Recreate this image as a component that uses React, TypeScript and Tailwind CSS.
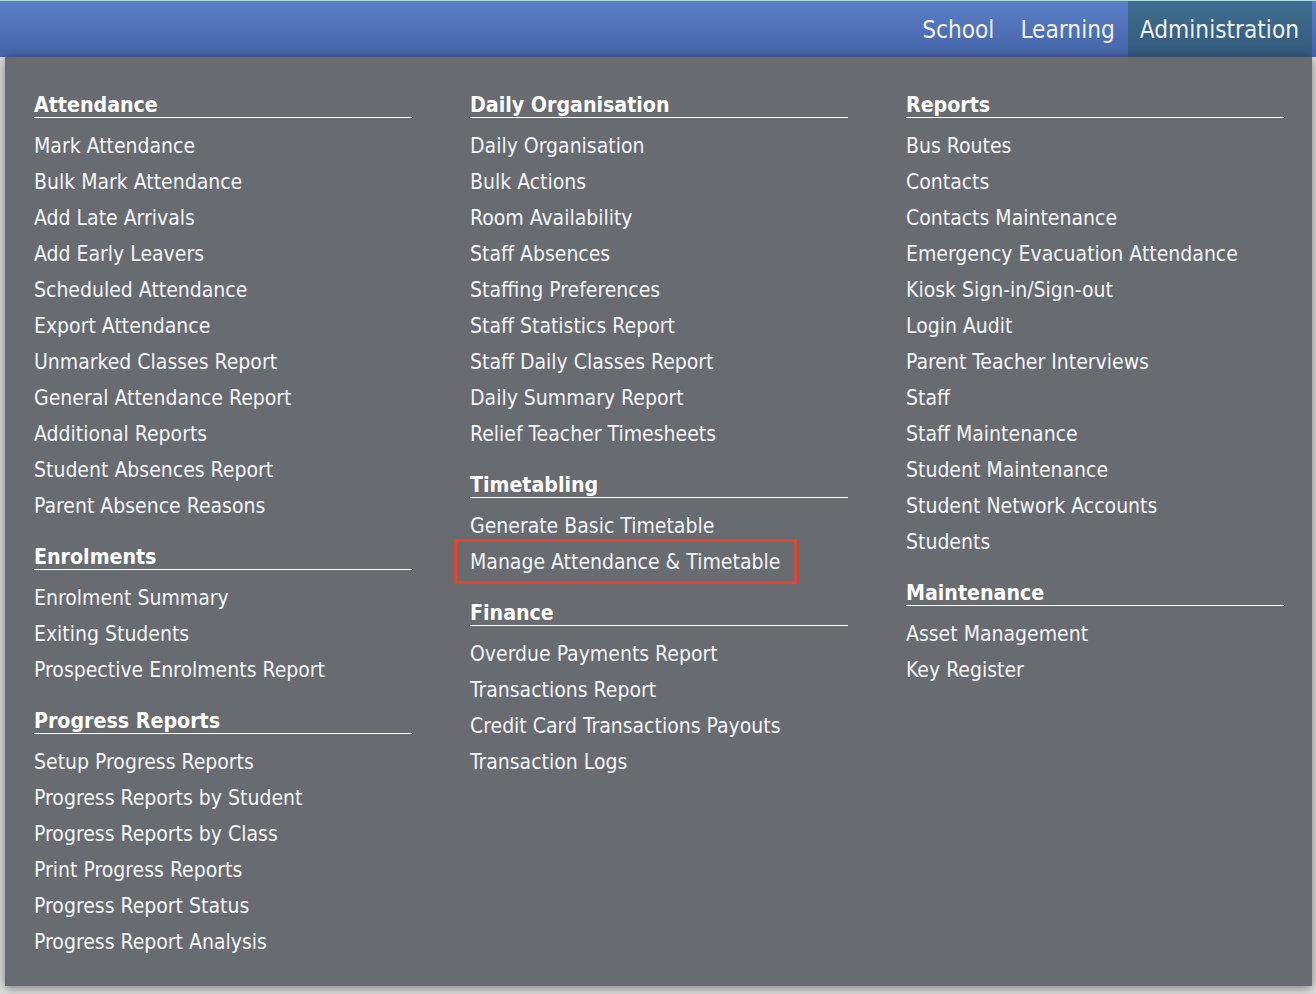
import React from "react";

type Section = { title: string; items: string[] };

const col1: Section[] = [
  {
    title: "Attendance",
    items: [
      "Mark Attendance",
      "Bulk Mark Attendance",
      "Add Late Arrivals",
      "Add Early Leavers",
      "Scheduled Attendance",
      "Export Attendance",
      "Unmarked Classes Report",
      "General Attendance Report",
      "Additional Reports",
      "Student Absences Report",
      "Parent Absence Reasons",
    ],
  },
  {
    title: "Enrolments",
    items: ["Enrolment Summary", "Exiting Students", "Prospective Enrolments Report"],
  },
  {
    title: "Progress Reports",
    items: [
      "Setup Progress Reports",
      "Progress Reports by Student",
      "Progress Reports by Class",
      "Print Progress Reports",
      "Progress Report Status",
      "Progress Report Analysis",
    ],
  },
];

const col2: Section[] = [
  {
    title: "Daily Organisation",
    items: [
      "Daily Organisation",
      "Bulk Actions",
      "Room Availability",
      "Staff Absences",
      "Staffing Preferences",
      "Staff Statistics Report",
      "Staff Daily Classes Report",
      "Daily Summary Report",
      "Relief Teacher Timesheets",
    ],
  },
  {
    title: "Timetabling",
    items: ["Generate Basic Timetable", "Manage Attendance & Timetable"],
  },
  {
    title: "Finance",
    items: [
      "Overdue Payments Report",
      "Transactions Report",
      "Credit Card Transactions Payouts",
      "Transaction Logs",
    ],
  },
];

const col3: Section[] = [
  {
    title: "Reports",
    items: [
      "Bus Routes",
      "Contacts",
      "Contacts Maintenance",
      "Emergency Evacuation Attendance",
      "Kiosk Sign-in/Sign-out",
      "Login Audit",
      "Parent Teacher Interviews",
      "Staff",
      "Staff Maintenance",
      "Student Maintenance",
      "Student Network Accounts",
      "Students",
    ],
  },
  {
    title: "Maintenance",
    items: ["Asset Management", "Key Register"],
  },
];

const HIGHLIGHT = "Manage Attendance & Timetable";

function Column({ sections }: { sections: Section[] }) {
  return (
    <div className="flex w-[378px] flex-col gap-[21px]">
      {sections.map((s) => (
        <div key={s.title} className="flex flex-col">
          <div className="h-[25px] border-b border-white text-[21.2px] font-bold leading-[24px] text-white">
            {s.title}
          </div>
          <ul className="mt-[10px] flex flex-col">
            {s.items.map((it) => (
              <li key={it} className="relative h-[36px] text-[21px] leading-[36px] text-[#f4f5f6]">
                {it}
                {it === HIGHLIGHT && (
                  <span className="pointer-events-none absolute left-[-16px] top-[-5px] h-[45px] w-[343px] border-[3px] border-[#e5432d]" />
                )}
              </li>
            ))}
          </ul>
        </div>
      ))}
    </div>
  );
}

export default function App() {
  return (
    <div
      className="relative h-[994px] w-[1316px] overflow-hidden bg-[#dcdcdc]"
      style={{ fontFamily: '"DejaVu Sans Condensed", "DejaVu Sans", Tahoma, sans-serif' }}
    >
      {/* top bar */}
      <div className="flex h-[57px] w-full items-stretch justify-end border-t border-[#a9dcd6] bg-gradient-to-b from-[#5a80c6] to-[#4563a8]">
        <div className="flex items-stretch pr-[4px] text-[24.2px] text-[#eef2fa]">
          <div className="flex items-center px-[13px] pt-[3px]">School</div>
          <div className="flex items-center px-[13px] pt-[3px]">Learning</div>
          <div className="flex items-center bg-gradient-to-b from-[#3f6e90] to-[#345a7c] pl-[12px] pr-[13px] pt-[3px]">
            Administration
          </div>
        </div>
      </div>

      {/* page behind */}
      <div className="flex h-[937px] flex-col">
        <div className="flex-1 bg-[#dedede]" />
      </div>

      {/* dropdown panel */}
      <div className="absolute left-[5px] top-[57px] h-[929px] w-[1307px] bg-[#686c70] pl-[29px] pt-[36px] shadow-[0_2px_10px_rgba(0,0,0,0.45)]">
        <div className="flex gap-[58px]">
          <Column sections={col1} />
          <Column sections={col2} />
          <Column sections={col3} />
        </div>
      </div>
    </div>
  );
}
